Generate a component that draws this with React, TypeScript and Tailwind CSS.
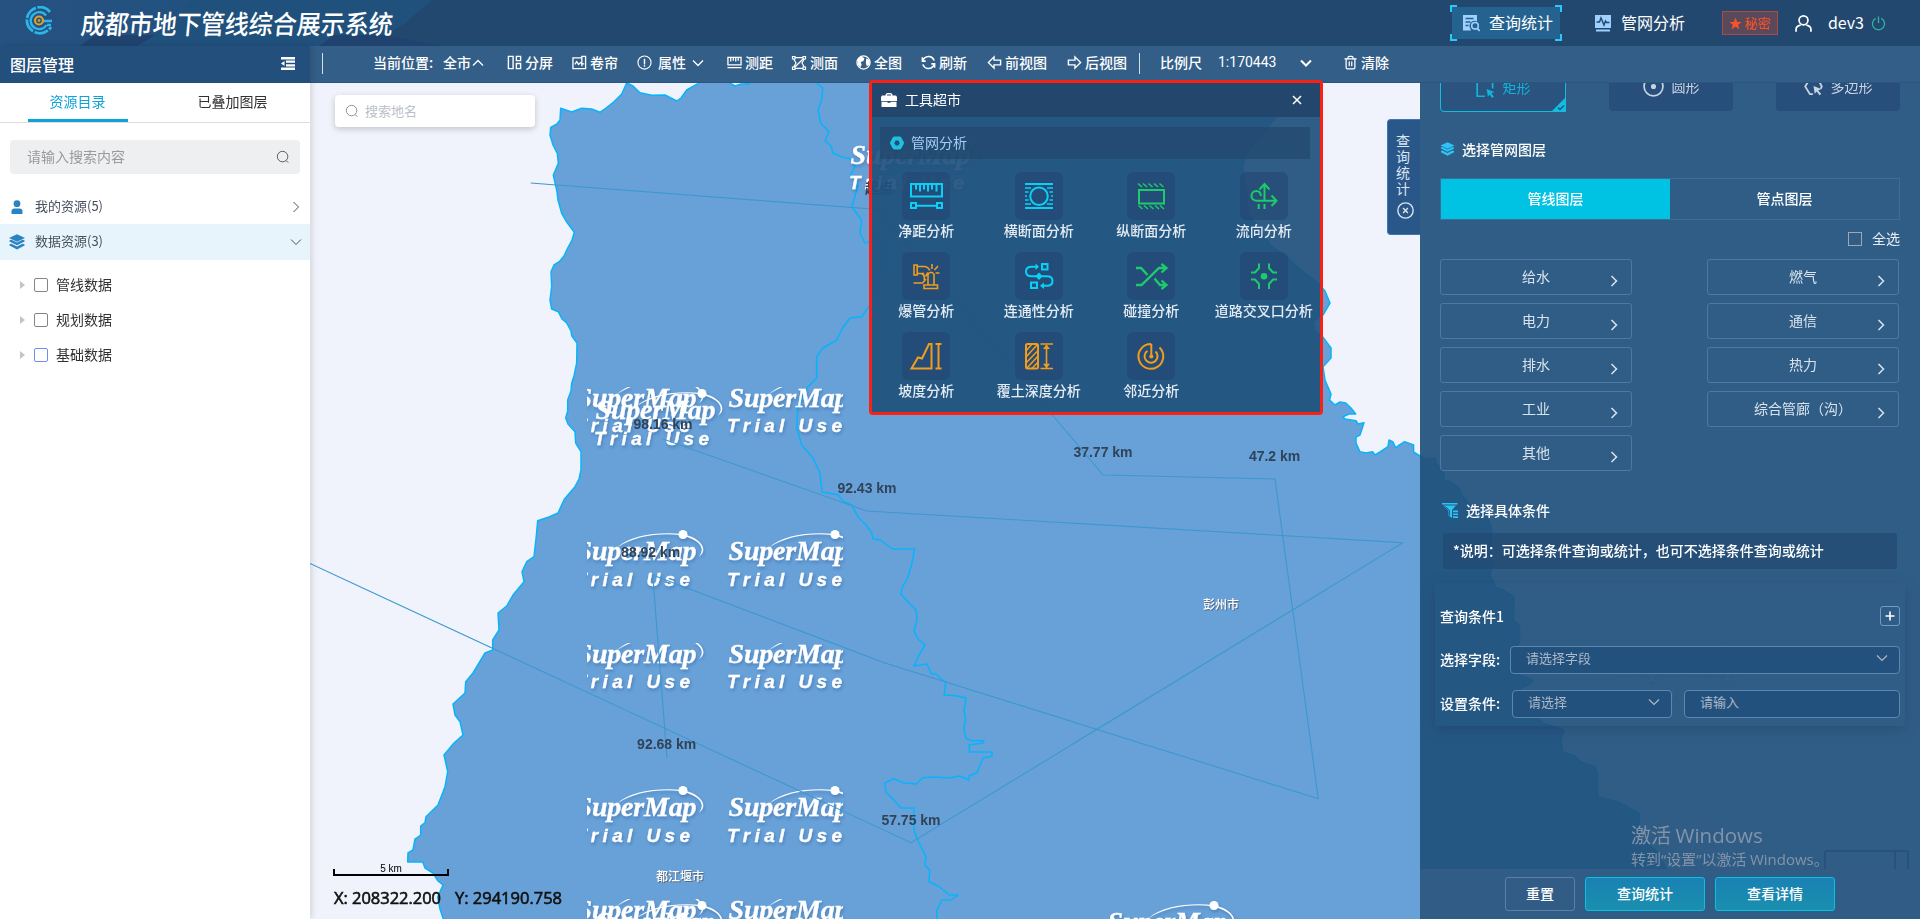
import React from "react";
import { LuTrash2 } from "react-icons/lu";

const LAND =
  "M626.7 83L621.7 94L613 102.7L606 108L600 112.3L591.7 109L581.7 108.3L571.7 112L560.7 108.3L560 120L557 124L550.7 127.3L550 135L553 145L557.3 153.3L558.3 163.3L553.3 175L557 191.7L558 200L561.7 213.3L566 221L574.3 232.3L572 240L566.7 250L564 256L559.3 261.7L554 265L551 271.7L551.7 286.7L550 300L551.7 309L558.3 311.7L562 319L566.7 323L571 331L571.7 335.7L577 343L576.7 363L574 376L571.7 383L571 391L567.7 400L567.7 411L565.7 418L568 424L575 431.7L575.7 443L581 451.7L581 470L579 479L575 486.7L564.3 499.3L558 513L549 517L537.7 520.7L536 539L534 556.7L526.7 561.7L522 571.7L524 581.7L513 595L506.7 606L498 613L499 630L492.7 640L492.7 650L485 653L473 673L465.7 681.7L465 693L453 704L455 715L460 721.7L463 735L454 743L444 755L447.7 771.7L445 786.7L438 805L426 816.7L425 822.7L420.7 826L420.7 835L415 839L413 850L408 853L407.7 862L422.7 862L425 868L433 873L438 881L443 885L440 891.7L437.7 897L440 909L444 921";
const EAST =
  "M1284 81L1275 117.7L1260 137L1245 155L1242.7 168L1246.7 191.7L1248 215L1260 228L1270 245L1286.7 256.7L1303 271.7L1318 283L1325 291L1330 303L1323 315L1313.3 321.7L1315 331.7L1322 336L1331 348L1331 358L1323 366.7L1325 380L1331 394L1329.6 400L1335 405L1340 402L1345.7 403L1351 408L1355.7 414L1349 414L1343 416.7L1345 419L1356 420.7L1358 424L1364 422.7L1360 435L1356 437L1356 443L1360 451.7L1366 453L1372.5 451.7L1375 455L1380 452L1388 446.7L1389 440L1393 442L1395.7 447.7L1398 446L1404.6 441.7L1413.6 445L1413.6 452L1420 456L1427 459L1435 458L1437 464L1444.7 475L1443.7 480.7L1451 482L1459 488L1461 494L1467.8 501.7L1472 509L1485 513L1492 528L1491 545L1492 566.7L1490 575L1496 587L1503 590L1514 596.7L1513.6 620L1519.5 625L1519.5 641.7L1513 652L1509 671.7L1520 675L1533 680L1530 684L1518 690L1518 700L1531.5 713L1545 724L1564 730L1561 740L1562.5 751.7L1575 756L1581 762L1595 766.7L1597.6 775L1597.6 796.7L1617.6 801.7L1639 813L1639 836.7L1655.5 850L1666 868L1672 921";
const INNER =
  "M816.7 83L822.7 88L821.7 100L818 110L820.7 123L829 131.7L825 140.7L831 146L833 153L842 157L851.7 159L855 166.7L850.7 175L858 185L855 196L851.7 206.7L861.7 220L860 233L865 243L880 238L884 255L878 290L870 305L861.7 316.7L850 318L842 329L836.7 340L823 348L816.7 356.7L816.7 378L808 386.7L798 406.7L796.7 428L801.7 445L813 458L820 473L822 492L838 494.8L843 501L851.7 505L858 517L866 525L871.7 533L873 539L880 540L892.7 549L914.6 549L912 563L908 577L902 588L901 594L909 603L916 610L917 620L914 631L918 639L925 645L919 655L914 666L926.7 664L931.7 674L936 674L945.7 683L944 695L956 695.7L966 698L964 710L965.7 720L963.6 728L966 738L971 740.7L984 740.7L983 743L969 745L969.6 752L992 752L992 756L983 758L977 772.7L969 776L969 780L960 776L949 778L935 777L922.5 777.7L916.4 784L903 782.7L894 778.7L885 783L885.7 791.7L893 799L901 808L914 808L914 830L918 841L926 856.7L925 865L929.6 870L929 881.7L938 886L945.7 892L949 895L958 895L951 900L942 900L936.8 910L936.8 921";

const LABELS: [string, number, number][] = [
  ["98.16 km", 663, 424],
  ["88.92 km", 650.7, 552],
  ["92.43 km", 867, 488],
  ["92.68 km", 666.7, 744],
  ["57.75 km", 911, 820],
  ["37.77 km", 1103, 452],
  ["47.2 km", 1274.6, 456],
];

function Watermark({ x, y }: { x: number; y: number }) {
  return (
    <g transform={`translate(${x} ${y})`} fill="#fff">
      <text x="-0.5" y="-0.5" fontFamily="'Liberation Serif', serif" fontWeight="700" fontStyle="italic" fontSize="28" textLength="120" stroke="#fff" strokeWidth="0.3">
        SuperMap
      </text>
      <text x="-2" y="25.3" fontFamily="'Liberation Sans', sans-serif" fontWeight="700" fontStyle="italic" fontSize="19" letterSpacing="4.4" stroke="#fff" strokeWidth="0.3">
        Trial Use
      </text>
      <path d="M40 -13C54 -26 84 -29 106 -26.300C124 -23 132 -10 122 -4C129 -12 123 -21 104 -25.300C84 -28 58 -25 40 -13Z" />
      <circle cx="106" cy="-26" r="4.500" />
    </g>
  );
}

function MapCanvas() {
  const tile = (
    <>
      {[20, 173.500].map((dy) =>
        [577, 729].map((x) => <Watermark key={`${x}-${dy}`} x={x} y={387 + dy} />)
      )}
    </>
  );
  return (
    <svg className="absolute inset-0 h-full w-full" viewBox="310 83 1610 836">
      <defs>
        <clipPath id="t1"><rect x="587" y="387" width="256" height="256" /></clipPath>
        <filter id="soft" x="-5%" y="-5%" width="110%" height="110%">
          <feDropShadow dx="1" dy="2" stdDeviation="1.500" floodColor="#1f4a80" floodOpacity="0.35" />
        </filter>
      </defs>
      <rect x="310" y="83" width="1610" height="836" fill="#f0f3fb" />
      <path d={`${LAND}L1672 921${EAST.split("L").slice(1).reverse().map((p) => `L${p}`).join("")}L1284 81Z`} fill="#68a0d8" />
      <path d="M626.7 82L633 86L640 92.700L651.700 95.300L665 95L676.700 101L681 98L686.700 90L698 83.700V80ZM728 80L730 83.300L735 86L741 84L750 83.700V80Z" fill="#f0f3fb" />
      <g fill="none" stroke="#07b4fb" strokeWidth="1.500" strokeLinejoin="round">
        <path d={LAND} />
        <path d="M626.7 83L633 86L640 92.700L651.700 95.300L665 95L676.700 101L681 98L686.700 90L698 83.700M730 83L735 86L741 84L750 83.700" />
        <path d={EAST} />
        <path d={INNER} />
      </g>
      <g filter="url(#soft)">
        <g clipPath="url(#t1)">{tile}</g>
        <g transform="translate(0 256)"><g clipPath="url(#t1)">{tile}</g></g>
        <g transform="translate(0 512)"><g clipPath="url(#t1)">{tile}</g></g>
        <Watermark x={596} y={419.5} />
        <Watermark x={851} y={164} />
        <Watermark x={596} y={931.5} />
        <Watermark x={1108} y={931.5} />
        <Watermark x={1620} y={675} />
      </g>
      <g fill="none" stroke="#3b99cf" strokeWidth="1.100">
        <path d="M530.700 183L878 209.500L1056.700 420L1103 475L1275 479L1318.300 798.700L885 663L652.700 575L667 758" />
        <path d="M663 439L866.700 511L1402.800 542.700L911 842.700L310 563.500" />
      </g>
      <g fontFamily="'Liberation Sans', 'Noto Sans CJK SC', sans-serif" fontSize="14" fontWeight="700" fill="#2f4359" textAnchor="middle">
        {LABELS.map(([t, x, y]) => (
          <text key={t} x={x} y={y + 5}>{t}</text>
        ))}
        <text x="879" y="193">起点</text>
      </g>
      <g fontFamily="'Noto Sans CJK SC', sans-serif" fontSize="12" fontWeight="500" textAnchor="middle">
        <g fill="#5b6b80"><text x="681" y="881.500">都江堰市</text><text x="1222" y="610">彭州市</text></g>
        <g fill="#fff"><text x="680" y="880.500">都江堰市</text><text x="1221" y="609">彭州市</text></g>
      </g>
      <path d="M334 869v6h114v-6" fill="none" stroke="#000" strokeWidth="2" />
      <text x="391" y="872" fontFamily="'Liberation Sans', sans-serif" fontSize="10" textAnchor="middle" fill="#000">5 km</text>
      <g fontFamily="'Open Sans', sans-serif" fontSize="16.500" fontWeight="500" fill="#111" stroke="#111" strokeWidth="0.600">
        <text x="334" y="904" textLength="107">X: 208322.200</text>
        <text x="455" y="904" textLength="107">Y: 294190.758</text>
      </g>
    </svg>
  );
}

function Svg({ s = 16, box = 16, w = 1.3, className = "", children }: { s?: number; box?: number; w?: number; className?: string; children: React.ReactNode }) {
  return (
    <svg width={s} height={s} viewBox={`0 0 ${box} ${box}`} fill="none" stroke="currentColor" strokeWidth={w} className={`shrink-0 ${className}`}>
      {children}
    </svg>
  );
}

function SearchIcon({ className = "" }: { className?: string }) {
  return (
    <Svg s={14} w={1.100} className={className}>
      <circle cx="7.500" cy="7.500" r="6" />
      <path d="M11.500 12l2.500 2.500" />
    </Svg>
  );
}

function Chevron({ dir, className = "", s = 12, w = 1.3 }: { dir: "up" | "down" | "right"; className?: string; s?: number; w?: number }) {
  const d = dir === "up" ? "M1 8.500l5-5 5 5" : dir === "down" ? "M1 3.500l5 5 5-5" : "M3.500 1l5 5-5 5";
  return <Svg s={s} box={12} w={w} className={className}><path d={d} /></Svg>;
}

function StackIcon({ className = "" }: { className?: string }) {
  return (
    <svg viewBox="0 0 16 16" className={`shrink-0 ${className}`} fill="currentColor">
      <path d="M8 0.300l8 3.700-8 3.700L0 4z" />
      <path d="M0.500 6.200l2-0.500L8 8.500l5.500-2.800 2 0.500v1.300L8 11.200 0.500 7.500z" />
      <path d="M0.500 10.300l2-0.500L8 12.600l5.500-2.800 2 0.500v1.300L8 15.600 0.500 11.600z" />
    </svg>
  );
}

function Header() {
  return (
    <header className="relative flex h-[46px] shrink-0 items-center overflow-hidden bg-[#23486f]">
      <svg className="absolute inset-0 h-full w-full" viewBox="0 0 1920 46" preserveAspectRatio="none">
        <defs>
          <linearGradient id="hd" x1="0" x2="1"><stop offset="0" stopColor="#255280" /><stop offset="1" stopColor="#21507d" /></linearGradient>
        </defs>
        <path d="M0 0H432L405 23L385 35H335L320 46H0Z" fill="url(#hd)" />
        <path d="M192 0H432L405 23L385 35H335L320 46H80L95 35H155L172 23Z" fill="#20507c" />
        <path d="M80 46L95 35H155L137 46ZM319 46L334 35H385L440 46Z" fill="#1f436e" />
      </svg>
      <svg className="relative ml-[23.5px] h-[30px] w-[30px] -translate-y-[2px]" viewBox="0 0 30 30" fill="none" stroke="#2db4e8" strokeWidth="2.800">
        <path d="M26 6A13 13 0 1 0 27 21" strokeDasharray="14 1.500" />
        <path d="M22 9.500A8.500 8.500 0 1 0 22.500 19M20 15h8M23 19h4" strokeWidth="2.400" />
        <circle cx="15" cy="14.500" r="4" stroke="#dba32c" strokeWidth="2.200" />
        <path d="M13.800 13.300h2.400v2.400h-2.400z" fill="#dba32c" stroke="none" />
      </svg>
      <h1 className="relative ml-[27px] w-[312px] -skew-x-6 scale-y-110 text-[24px] leading-[36px] font-medium whitespace-nowrap text-white">成都市地下管线综合展示系统</h1>
      <nav className="relative ml-auto flex items-center text-[16px] text-white">
        <a className="relative mr-[34px] flex h-[32px] w-[108px] items-center bg-[#246290] pl-[10px]">
          <svg className="absolute -top-[2px] -left-[2px] h-[36px] w-[112px]" viewBox="0 0 112 36" fill="none" stroke="#2ec8f8" strokeWidth="2">
            <path d="M1 7V1h6M105 1h6v6M111 29v6h-6M7 35H1v-6" />
          </svg>
          <svg width="18" height="18" viewBox="0 0 18 18" className="mr-[9px]" fill="#9fd0ff">
            <path d="M1 1h14v6.500a5 5 0 0 0-7 6.500l1 2.500H1z" />
            <path d="M3.500 4.500h8M3.500 8h5M3.500 11.500h3" stroke="#246290" strokeWidth="1.300" />
            <circle cx="13" cy="11.800" r="3.300" fill="#246290" stroke="#9fd0ff" strokeWidth="1.600" />
            <path d="M15.200 14.300l2.400 2.700" stroke="#9fd0ff" strokeWidth="1.800" />
          </svg>
          <span className="-mt-[2px] whitespace-nowrap">查询统计</span>
        </a>
        <a className="flex items-center">
          <svg width="18" height="18" viewBox="0 0 18 18" className="mr-[9px]" fill="#9fd0ff">
            <path d="M1 1h16v13H1zM2 15.500h14V17.500H2z" />
            <path d="M2.500 8h3l1.500-4 3 7 1.500-4 1 1.500h3" stroke="#23486f" strokeWidth="1.400" fill="none" />
          </svg>
          <span className="-mt-[2px] whitespace-nowrap">管网分析</span>
        </a>
        <span className="ml-[37px] flex h-[24px] w-[56px] items-center justify-center border border-[#a84b42] bg-[#59495b] text-[13px] text-[#fb5326]">
          <svg width="13" height="13" viewBox="0 0 24 24" fill="currentColor" className="mr-[2px]"><path d="M12 1l3 8h8.500l-6.800 5.200L19.300 23 12 17.700 4.700 23l2.600-8.800L.5 9H9z" /></svg>
          秘密
        </span>
        <Svg s={17} w={1.600} className="ml-[17px]"><circle cx="8" cy="5" r="4.200" /><path d="M1 15.700v-2.200c0-1.700 1.500-3.500 4.300-4M15 15.700v-2.200c0-1.700-1.500-3.500-4.300-4" /></Svg>
        <span className="-mt-[2px] ml-[16px] text-[16px]">dev3</span>
        <Svg s={15} w={1.400} className="mr-[34px] ml-[7px] text-[#2fb3a5]"><path d="M5 2.500a6.500 6.500 0 1 0 6 0M8 0.500v7" /></Svg>
      </nav>
    </header>
  );
}

function Tool({ className, icon, label }: { className: string; icon: React.ReactNode; label: string }) {
  return (
    <span className={`flex items-center gap-[3px] whitespace-nowrap ${className}`}>
      {icon}
      {label}
    </span>
  );
}

function Toolbar() {
  return (
    <div className="relative flex h-[37px] shrink-0 items-center border-b border-[#2c567f] bg-[#335e87] pb-[3px] text-[14px] font-medium text-white">
      <i className="mt-[2px] ml-[12px] h-[21px] w-px bg-white/80" />
      <span className="ml-[50px] w-[70px] whitespace-nowrap">当前位置:</span>
      <span>全市</span>
      <Chevron dir="up" className="ml-[1px]" />
      <Tool className="ml-[23px]" label="分屏" icon={<Svg s={15} w={1.500}><path d="M1.500 1.500h5v13h-5zM10 1.500h4.500v4.500H10zM10 9h4.500v5.500H10z" /></Svg>} />
      <Tool className="ml-[19px]" label="卷帘" icon={<Svg s={15} w={1.400}><path d="M10 3H1v11.500h13.500V1.500H10.500V12M3 10l2-3 2 3 2-2 2 1.500h2" /></Svg>} />
      <span className="ml-[19px] flex items-center whitespace-nowrap">
        <Svg s={15} w={1.200}><circle cx="8" cy="8" r="7" /><path d="M8 4v6M8 11v1.500" strokeWidth="1.500" /></Svg>
        <span className="mr-[6px] ml-[6px]">属性</span>
        <Chevron dir="down" />
      </span>
      <Tool className="ml-[23px]" label="测距" icon={<Svg s={15} w={1.400}><path d="M1 2.500h14v8H1zM4 3v4M6.700 3v3M9.300 3v4M12 3v3M0.500 13.500h15" /></Svg>} />
      <Tool className="ml-[18px]" label="测面" icon={<Svg s={16} w={1.200}><path d="M1.500 1.500h2.500v2.500H1.500zM12 1.500h2.500v2.500H12zM1.500 12h2.500v2.500H1.500zM12 12h2.500v2.500H12zM4 2.700h8M4 13.300h8M2.700 4l2.300 4-2.300 4M13.300 4L11 8l2.300 4M4 12l8-8" /></Svg>} />
      <Tool className="ml-[18px]" label="全图" icon={<Svg s={15} w={1.400}><circle cx="8" cy="8" r="7" /><path d="M2 4l4-2.500 3 2-1 3-3 1 1 3-1.500 3L2 10zM11 3.500l3.500 2L14.500 10l-3 2-1-3.500z" fill="currentColor" stroke="none" /></Svg>} />
      <Tool className="ml-[19px]" label="刷新" icon={<Svg s={15} w={1.700}><path d="M14 6A6.300 6.300 0 0 0 3 4L1.500 6M2 10a6.300 6.300 0 0 0 11 2l1.500-2M1.500 2.500V6.500H5M14.500 13.500v-4H11" /></Svg>} />
      <Tool className="ml-[20px]" label="前视图" icon={<Svg s={15} w={1.500}><path d="M7.500 2L1.500 8l6 6v-3.500h7v-5h-7z" /></Svg>} />
      <Tool className="ml-[20px]" label="后视图" icon={<Svg s={15} w={1.500}><path d="M8.500 2l6 6-6 6v-3.500h-7v-5h7z" /></Svg>} />
      <i className="mt-[2px] ml-[12px] h-[21px] w-px bg-white/80" />
      <span className="ml-[20px] w-[58px] whitespace-nowrap">比例尺</span>
      <span className="w-[82px] font-['Roboto',sans-serif] text-[14px] font-normal">1:170443</span>
      <Chevron dir="down" w={2} />
      <Tool className="ml-[31px]" label="清除" icon={<LuTrash2 size={15} />} />
    </div>
  );
}

function Sidebar() {
  return (
    <aside className="relative z-10 flex w-[310px] shrink-0 flex-col bg-white shadow-[2px_0_6px_rgba(0,0,0,0.12)]">
      <div className="flex h-[37px] items-center justify-between bg-[#234f7d] pr-[15px] pb-[2px] pl-[10px] text-[16px] font-medium text-white">
        图层管理
        <svg width="14" height="13" viewBox="0 0 14 13" fill="#fff"><path d="M0 0h14v2.400H0zM5 3.600h9v2.200H5zM5 7.200h9v2.200H5zM0 10.600h14V13H0zM0 6.500L3.500 4v5z" /></svg>
      </div>
      <div className="flex h-[40px] border-b border-[#dcdcdc] text-[14px] text-[#303133]">
        <div className="flex w-[155px] justify-center">
          <span className="flex h-[39px] w-[100px] items-center justify-center border-b-[3px] border-[#0ea3d8] text-[#0ea3d8]">资源目录</span>
        </div>
        <div className="flex w-[155px] items-center justify-center pb-[3px]">已叠加图层</div>
      </div>
      <div className="mx-[10px] mt-[17px] flex h-[34px] items-center justify-between rounded bg-[#edeff0] pr-[10px] pb-[1px] pl-[17px] text-[14px] text-[#9a9a9a]">
        请输入搜索内容
        <SearchIcon className="text-[#555]" />
      </div>
      <div className="mt-[15px] flex h-[35px] items-center pr-[8px] pl-[10px] text-[13px] text-[#484f5f]">
        <svg width="14" height="14" viewBox="0 0 14 14" fill="#2a84c2"><circle cx="7" cy="3.700" r="3.400" /><path d="M1.500 14v-2.500a3 3 0 0 1 3-3h5a3 3 0 0 1 3 3V14z" /></svg>
        <span className="-mt-[2px] ml-[11px] flex-1">我的资源(5)</span>
        <Chevron dir="right" w={1} />
      </div>
      <div className="flex h-[36px] items-center bg-[#e8f4fb] pr-[8px] pl-[9px] text-[13px] text-[#484f5f]">
        <StackIcon className="h-[16px] w-[16px] text-[#2a84c2]" />
        <span className="-mt-[2px] ml-[10px] flex-1">数据资源(3)</span>
        <Chevron dir="down" w={1} />
      </div>
      <div className="flex flex-col pt-[7px] text-[14px] text-[#303133]">
        {["管线数据", "规划数据", "基础数据"].map((t, i) => (
          <div key={t} className="flex h-[35px] items-center pl-[20px]">
            <svg width="5" height="8" viewBox="0 0 5 8" fill="#c0c4cc"><path d="M0 0l5 4-5 4z" /></svg>
            <i className={`mr-[8px] ml-[9px] h-[14px] w-[14px] rounded-[2px] border ${i === 2 ? "border-[#6f8ff0]" : "border-[#858585]"}`} />
            {t}
          </div>
        ))}
      </div>
    </aside>
  );
}

const C = "#0bd0f5";
const G = "#1ecb6b";
const O = "#f19c1c";

const TOOLS: { label: string; color: string; art: React.ReactNode }[] = [
  { label: "净距分析", color: C, art: <><path d="M9 12h31v12.500H9zM14 12v5.500M18 12v7.500M22 12v5.500M26 12v7.500M30 12v5.500M34.500 12v7.500M15 33.700h19" /><path d="M9 31h5v5H9zM35 31h5v5h-5z" /></> },
  { label: "横断面分析", color: C, art: <><circle cx="24" cy="24.300" r="8.800" /><path d="M10 12h28M10 36h28" /><path d="M10 16h6M10 20h3.500M10 24h2M10 28h3.500M10 32h6M38 16h-6M38 20h-3.500M38 24h-2M38 28h-3.500M38 32h-6" strokeWidth="1.400" /></> },
  { label: "纵断面分析", color: G, art: <><path d="M12 18h25v13.500H12z" /><path d="M11 11.500l4 3.500M16 11.500l4 3.500M21.500 11.500l4 3.500M27 11.500l4 3.500M32.500 11.500l4 3.500M11.500 33.500l4 3.500M17 33.500l4 3.500M22.500 33.500l4 3.500M28 33.500l4 3.500M33 33.500l4 3.500" strokeWidth="1.500" /></> },
  { label: "流向分析", color: G, art: <path d="M36 28.700H17C13 28.700 11.500 26 11.500 24c0-3 2-5 4.800-5 3 0 4.500 2.300 4.500 5M24.500 28V12.500M19.500 17.500l5-5.500 5 5.500M31.500 23.500l5 5.200-5 5.300M18.700 32v5M24.500 32v5" /> },
  { label: "爆管分析", color: O, art: <path d="M12 13h3.200v10H12zM15.200 14.500h7c3 0 4.500 1.500 5.500 4M15.200 21.500h7M11.500 31h9l3.500-4M19.500 22c2 0 2.800 1 2.800 3.500V28M26 33V22.500c1.500-3 4.500-3 6 0V33M22 33h13.500v3.500H22zM30 17v-5M32.500 18l3.500-4M33.500 21h4M26 20.500l-2.500 4" strokeWidth="1.600" /> },
  { label: "连通性分析", color: C, art: <><path d="M27 12h5.500v5.500H27zM16 30.500h6V36h-6zM23 14.700h-6.500c-3.500 0-5.500 2-5.500 4.700s2 4.800 5.500 4.800H32c3.500 0 5.500 2 5.500 4.700s-2 4.800-5.500 4.800h-5" /><path d="M24 20.500l3.700 3.700L24 28l-3.700-3.800zM20.500 11.500l3.500 3.200-3.500 3.300zM29 30.500l-4 3.200 4 3.300z" fill="currentColor" stroke="none" /></> },
  { label: "碰撞分析", color: G, art: <path d="M9 16h5l6.500 7M9 33h5.500L32 16h7M27.500 26.500L33 33h6M34.500 12l5 4-5 4.500M34.500 28.500l5 4.500-5 4" strokeWidth="2.300" /> },
  { label: "道路交叉口分析", color: G, art: <><path d="M19 11.500V16l-4 4.500h-4M29 11.500V16l4 4.500h4M19 37v-5l-4-4.500h-4M29 37v-5l4-4.500h4" /><circle cx="24" cy="24.300" r="3.300" fill="currentColor" stroke="none" /></> },
  { label: "坡度分析", color: O, art: <path d="M9.500 36.500L16 25.500l4 1 7-14.500h2.500v24.500zM36.500 12v24.500M33.500 12h6M33.500 36.500h6" /> },
  { label: "覆土深度分析", color: O, art: <><rect x="11" y="12" width="12" height="24.500" rx="1.500" /><path d="M11 19l6-7M11 25l11-12M11 31l12-12.500M12 36l11-12M17 36.500l6-6.500M31.500 13v23M25.500 12H38M25.500 36.500H38" strokeWidth="1.600" /><path d="M31.500 12.500l3.500 4.500h-7zM31.500 36.200l3.500-4.500h-7z" fill="currentColor" stroke="none" /></> },
  { label: "邻近分析", color: O, art: <><path d="M24.300 12A12.400 12.400 0 1 0 32.500 15.500M24.300 12v12M20.500 18.800A6.500 6.500 0 1 0 28.500 19.500" /><circle cx="24.300" cy="24.500" r="2" fill="currentColor" stroke="none" /></> },
];

function ToolMarket() {
  return (
    <section className="absolute -top-[3px] left-[559px] z-20 flex h-[335px] w-[454px] flex-col rounded-[4px] border-[3px] border-[#fb2016] bg-[rgba(32,80,124,0.92)]">
      <div className="flex h-[34px] shrink-0 items-center bg-[#23466d] pr-[18px] pl-[9px] text-[14px] text-white">
        <svg width="16" height="14" viewBox="0 0 16 14" fill="#fff" className="mr-[8px]"><path d="M4.500 2.500V1.500L6 0h4l1.500 1.500v1H15l1 1.500v4H0V4l1-1.500zM6 2.500h4V1.500H6zM0.500 8.700h6v1h3v-1h6V14H.5z" /></svg>
        <span className="-mt-[2px] flex-1">工具超市</span>
        <Svg s={10} box={10} w={1.500}><path d="M1 1l8 8M9 1l-8 8" /></Svg>
      </div>
      <div className="mr-[10px] ml-[8px] mt-[10px] flex h-[32px] shrink-0 items-center bg-[rgba(35,72,110,0.75)] pl-[10px] text-[14px] text-[#a5cdf8]">
        <svg width="14" height="14" viewBox="0 0 14 14" className="mr-[7px]" fill="none" stroke="#1fbfe0" strokeWidth="4"><path d="M4.500 2.500h5L12 7l-2.500 4.500h-5L2 7z" strokeLinejoin="round" /></svg>
        <span className="-mt-[2px]">管网分析</span>
      </div>
      <div className="-ml-[2px] grid w-[450px] grid-cols-4 gap-y-[9px] pt-[13px]">
        {TOOLS.map((t) => (
          <div key={t.label} className="flex h-[71px] flex-col items-center whitespace-nowrap text-[14px] text-[#e3ebf3]">
            <svg width="48" height="48" viewBox="0 0 48 48" className="shrink-0 rounded-[6px] bg-[rgba(35,72,115,0.7)]" fill="none" stroke="currentColor" strokeWidth="2" color={t.color}>
              {t.art}
            </svg>
            <span className="font-medium leading-[20px]">{t.label}</span>
          </div>
        ))}
      </div>
    </section>
  );
}

function LayerButton({ label }: { label: string }) {
  return (
    <div className="relative flex h-[36px] w-[192px] items-center justify-center rounded-[3px] border border-[#4c78a5] pb-[2px] text-[14px] text-[#d9e3ee]">
      {label}
      <Chevron dir="right" w={1.500} className="absolute top-[15px] right-[11px]" />
    </div>
  );
}

function Select({ className, text, arrow = true }: { className: string; text: string; arrow?: boolean }) {
  return (
    <div className={`flex h-[28px] items-center justify-between rounded-[4px] border border-[#5c87b3] bg-[#22517d] pr-[11px] pb-[4px] pl-[15px] text-[13px] text-[#adb9c6] ${className}`}>
      {text}
      {arrow && <Chevron dir="down" w={1.200} />}
    </div>
  );
}

function QueryPanel() {
  return (
    <aside className="relative ml-auto flex w-[500px] shrink-0 flex-col bg-[rgba(32,80,124,0.92)] text-[14px] text-white">
      <div className="absolute top-[36px] -left-[33px] flex h-[116px] w-[33px] flex-col items-center rounded-l-[4px] border border-r-0 border-[#3a76b8] bg-[#2a5789] pt-[12px] text-[14px] leading-[16px] text-[#dbe5f0]">
        {"查询统计".split("").map((c) => <span key={c} className="-ml-[2px]">{c}</span>)}
        <Svg s={17} w={1.300} className="mt-[6px] ml-[2px]"><circle cx="8" cy="8" r="7.200" /><path d="M5.700 5.700l4.600 4.600M10.300 5.700l-4.600 4.600" /></Svg>
      </div>
      <div className="flex h-[29px] items-end justify-between overflow-hidden pr-[20px] pl-[20px]">
        <div className="relative flex h-[48px] w-[126px] shrink-0 items-center justify-center rounded-b-[4px] border border-[#12bde0] bg-[#2a547f] pb-[2px] text-[#12b4d9]">
          <Svg s={19} w={1.400} className="mt-[2px] mr-[8px]"><path d="M7.500 14.500H1V1h13v7" /><path d="M9 8.500l6.500 2.500-2.500 1 2 3-1.500 1-2-3-1.500 2z" fill="currentColor" stroke="none" /></Svg>
          矩形
          <svg width="15" height="15" viewBox="0 0 15 15" className="absolute -right-px -bottom-px"><path d="M15 0v15H0z" fill="#12bde0" /><path d="M7 10.500l2 2 4-4" stroke="#22517d" strokeWidth="1.500" fill="none" /></svg>
        </div>
        <div className="mb-px flex h-[48px] w-[124px] shrink-0 items-center justify-center rounded-b-[4px] bg-[#284f7b] pb-[2px] text-[#c8d4e2]">
          <Svg s={21} w={1.300} className="mr-[8px]"><circle cx="8" cy="8" r="7.200" /><circle cx="8" cy="8" r="1.300" fill="currentColor" /></Svg>
          圆形
        </div>
        <div className="mb-px flex h-[48px] w-[124px] shrink-0 items-center justify-center rounded-b-[4px] bg-[#284f7b] pb-[2px] text-[#c8d4e2]">
          <Svg s={19} w={1.500} className="mt-[1px] mr-[8px]"><path d="M7.500 14.500H5L1 8l4-6.500h6.500L15 8l-1 2" /><path d="M8 7.500l6.500 2.500-2.500 1.300 2.500 3-1.500 1-2.300-3L9 14z" fill="currentColor" stroke="none" /></Svg>
          多边形
        </div>
      </div>
      <div className="mt-[25px] ml-[20px] flex h-[24px] items-center font-medium">
        <StackIcon className="mr-[7px] h-[14px] w-[15px] text-[#2cc4f5]" />
        选择管网图层
      </div>
      <div className="mx-[20px] mt-[17px] flex h-[42px] border border-[#3e6c9b] font-medium">
        <div className="flex w-[229px] items-center justify-center bg-[#00c3e3] pb-[2px]">管线图层</div>
        <div className="flex flex-1 items-center justify-center pb-[2px]">管点图层</div>
      </div>
      <div className="mt-[8px] mr-[20px] flex h-[20px] items-center justify-end text-[#e6edf4]">
        <i className="mt-[1px] mr-[10px] h-[14px] w-[14px] border border-[#9ea8b2]" />
        全选
      </div>
      <div className="mt-[11px] mr-[21px] ml-[20px] grid grid-cols-2 gap-y-[8px]">
        {["给水", "燃气", "电力", "通信", "排水", "热力", "工业", "综合管廊（沟）", "其他"].map((l, i) => (
          <div key={l} className={i % 2 ? "flex justify-end" : "flex"}><LayerButton label={l} /></div>
        ))}
      </div>
      <div className="mt-[27px] ml-[22px] flex h-[24px] items-center font-medium">
        <svg width="16" height="15" viewBox="0 0 16 15" className="mr-[8px]" fill="#2cc4f5"><path d="M0 0h15.500v1.500H0zM1.500 2.500h12.500L10 7v8l-3.500-2.500V7.500zM11 7.500h5v1.700h-5zM11 10.400h5v1.700h-5zM11 13.300h5V15h-5z" /><path d="M3.500 3.500l4 4v5" stroke="#22517d" strokeWidth="0.900" fill="none" /></svg>
        选择具体条件
      </div>
      <div className="mt-[11px] ml-[23px] flex h-[36px] w-[454px] items-center rounded-[3px] bg-[rgba(32,70,110,0.65)] pb-[2px] pl-[10px] font-medium whitespace-nowrap">
        *说明：可选择条件查询或统计，也可不选择条件查询或统计
      </div>
      <div className="mx-[15px] mt-[14px] flex h-[143px] flex-col px-[5px] pt-[19px] shadow-[0_4px_12px_rgba(25,55,90,0.35)]">
        <div className="flex h-[28px] items-center justify-between font-medium">
          查询条件1
          <span className="flex h-[20px] w-[20px] items-center justify-center rounded-[3px] border border-[#6d9ccb]">
            <Svg s={10} box={10} w={1.600}><path d="M5 0.500v9M0.500 5h9" /></Svg>
          </span>
        </div>
        <div className="mt-[16px] flex h-[28px] items-center">
          <span className="-mt-[2px] w-[70px] font-medium">选择字段:</span>
          <Select className="w-[390px]" text="请选择字段" />
        </div>
        <div className="mt-[16px] flex h-[28px] items-center">
          <span className="-mt-[2px] w-[72px] font-medium">设置条件:</span>
          <Select className="w-[160px]" text="请选择" />
          <Select className="ml-auto w-[216px]" text="请输入" arrow={false} />
        </div>
      </div>
      <div className="relative mt-auto h-[50px] w-full shrink-0">
        <div className="absolute right-[11px] bottom-[50px] flex h-[19px] w-[85px] justify-end rounded-t-[3px] border-2 border-b-0 border-[#26527d]">
          <i className="w-[13px] border-l-2 border-[#26527d]" />
        </div>
        <div className="absolute bottom-[49px] left-[211px] whitespace-nowrap text-[#8494a8]">
          <p className="text-[20px] leading-[26px]">激活 <span className="font-['Open_Sans',sans-serif] text-[20.5px]">Windows</span></p>
          <p className="text-[15px] leading-[22px]">转到<span className="font-['Open_Sans',sans-serif]">“</span>设置<span className="font-['Open_Sans',sans-serif]">”</span>以激活 <span className="font-['Open_Sans',sans-serif]">Windows</span>。</p>
        </div>
        <div className="flex h-[50px] items-start gap-[10px] bg-[#315c86] pt-[8px] pl-[85px] font-medium">
          <button className="h-[34px] w-[70px] rounded-[3px] border border-[#5c7fa6] pb-[2px]">重置</button>
          <button className="h-[34px] w-[120px] rounded-[3px] border border-[#06c3e5] bg-linear-to-b from-[#1a81b4] to-[#1a8fae] pb-[2px]">查询统计</button>
          <button className="h-[34px] w-[120px] rounded-[3px] border border-[#06c3e5] bg-linear-to-b from-[#1a81b4] to-[#1a8fae] pb-[2px]">查看详情</button>
        </div>
      </div>
    </aside>
  );
}

export default function App() {
  return (
    <div className="flex h-[919px] w-[1920px] flex-col overflow-hidden font-['Noto_Sans_CJK_SC',sans-serif]">
      <Header />
      <div className="flex min-h-0 flex-1">
        <Sidebar />
        <main className="flex min-w-0 flex-1 flex-col">
          <Toolbar />
          <div className="relative flex min-h-0 flex-1">
            <MapCanvas />
            <div className="relative mt-[12px] ml-[25px] flex h-[32px] w-[200px] items-center rounded-[4px] bg-white pl-[10px] text-[13px] text-[#bcbfc9] shadow-[0_2px_6px_rgba(0,0,0,0.2)]">
              <SearchIcon className="mr-[6px] text-[#8a8f99]" />
              搜索地名
            </div>
            <ToolMarket />
            <QueryPanel />
          </div>
        </main>
      </div>
    </div>
  );
}
